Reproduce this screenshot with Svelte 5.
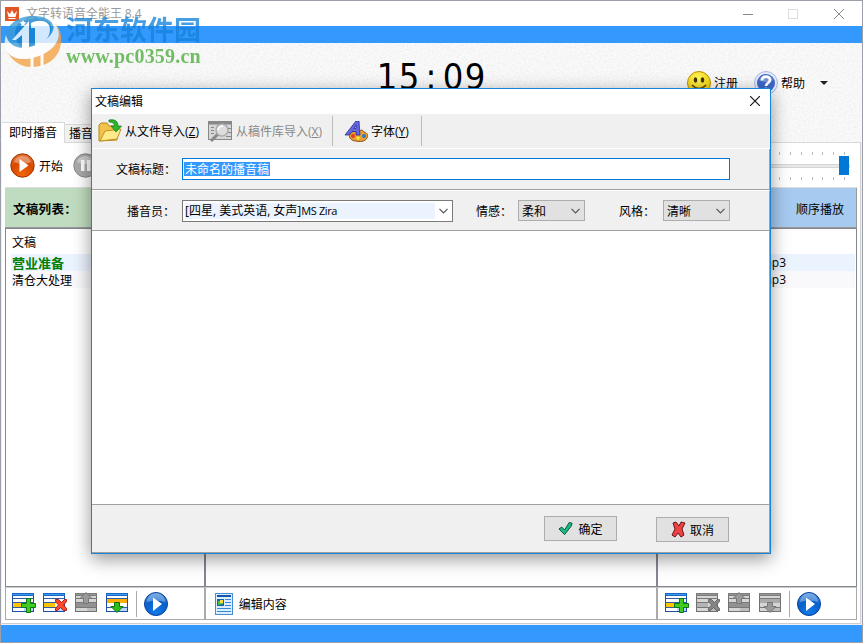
<script>
	const clock = "15:09".split("");

	let title = "未命名的播音稿";

	const scripts = [
		{ name: "营业准备", active: true },
		{ name: "清仓大处理", active: false },
	];

	const music = ["营业背景音乐.mp3", "清仓背景音乐.mp3"];

	const ticks = Array.from({ length: 38 });

	const leftTools = [
		{ kind: "add", disabled: false },
		{ kind: "remove", disabled: false },
		{ kind: "up", disabled: true },
		{ kind: "down", disabled: false },
	];

	const rightTools = [
		{ kind: "add", disabled: false },
		{ kind: "remove", disabled: true },
		{ kind: "up", disabled: true },
		{ kind: "down", disabled: true },
	];
</script>

{#snippet listIcon(kind, disabled)}
	<svg class="list-icon {kind}" class:disabled width="24" height="24" viewBox="0 0 24 24">
		<rect x="0.5" y="1.5" width="21" height="18" fill="#fff" stroke="#1b4fa3" />
		<rect x="0" y="1" width="22" height="3" fill="#1668c4" />
		<rect x="1" y="2" width="20" height="1" fill="#3c9bf0" />
		<path d="M1 6.500h20M1 10.500h20M1 15.500h20" stroke="#315c9e" />
		<rect x="12" y="16" width="9" height="3" fill="#b9d5fb" />
		{#if kind === "down"}
			<rect x="1" y="7" width="20" height="4" fill="#ffad08" />
			<path d="M8.500 10.500h5v4h3.500l-6 6-6-6h3.500z" fill="#32bc1b" stroke="#087308" />
		{:else if kind === "up"}
			<rect x="1" y="11" width="20" height="4" fill="#b08315" />
			<path d="M8.500 11.500h5v-5h3.500l-6-6-6 6h3.500z" fill="#32bc1b" stroke="#087308" />
		{:else}
			<rect x="1" y="11" width="11" height="4" fill="#ffc400" />
			{#if kind === "add"}
				<path d="M14.500 6.500h4v5h5v4h-5v5h-4v-5h-5v-4h5z" fill="#42cc22" stroke="#087a12" />
			{:else}
				<path d="M12.500 7.500h3l3 3 3-3h2v2l-3 3.500 3 3.500v2h-3l-3-3-3 3h-2v-2l3-3.500-3-3.500z" fill="#ff4927" stroke="#b71f14" />
			{/if}
		{/if}
	</svg>
{/snippet}

{#snippet playIcon()}
	<svg width="24" height="24" viewBox="0 0 24 24">
		<circle cx="12" cy="12" r="11.500" fill="url(#play-blue)" stroke="#0a3e9b" />
		<path d="M3 10a9 9 0 0 1 18 0c-6-2-12-1-18 0z" fill="#fff" opacity="0.3" />
		<path d="M9 5.500l9 6.500-9 7z" fill="#fff" />
	</svg>
{/snippet}

{#snippet chevron()}
	<svg class="chevron" width="9" height="6" viewBox="0 0 9 6">
		<path d="M0.500 0.800l4 4 4-4" fill="none" stroke="#555" stroke-width="1.200" />
	</svg>
{/snippet}

<div class="window">
	<header class="title-bar">
		<svg class="app-icon" width="14" height="14" viewBox="0 0 14 14">
			<rect width="14" height="14" fill="#e15624" />
			<path d="M2 4l3 3 2-4 2 4 3-3-1.500 6h-7zM3.500 11h7v1h-7z" fill="#fff" />
		</svg>
		<span class="app-title">文字转语音全能王 <i>8.4</i></span>
		<svg class="window-controls" width="106" height="12" viewBox="0 0 106 12">
			<path d="M0 6.500h10M91 1l10 10M101 1l-10 10" fill="none" stroke="#888" />
			<rect x="45.500" y="1.500" width="9" height="9" fill="none" stroke="#ddd" />
		</svg>
	</header>
	<div class="blue-bar top"></div>

	<section class="banner">
		<svg class="grain" width="100%" height="100%">
			<filter id="paper">
				<feTurbulence type="fractalNoise" baseFrequency="0.5" numOctaves="2" />
				<feColorMatrix values="1 0 0 0 0  1 0 0 0 0  1 0 0 0 0  0 0 0 0 1" />
			</filter>
			<rect width="100%" height="100%" filter="url(#paper)" />
		</svg>
		<div class="clock">
			{#each clock as digit}<span>{digit}</span>{/each}
		</div>
		<div class="links">
			<svg width="24" height="24" viewBox="0 0 24 24">
				<circle cx="12" cy="12" r="11.500" fill="url(#smile)" stroke="#b98d00" />
				<ellipse cx="8.500" cy="9" rx="1.800" ry="2.700" fill="#453500" />
				<ellipse cx="15.500" cy="9" rx="1.800" ry="2.700" fill="#453500" />
				<path d="M5 14q7 7 14 0" fill="none" stroke="#664a00" stroke-width="1.500" />
			</svg>
			<span class="register">注册</span>
			<svg width="24" height="24" viewBox="0 0 24 24">
				<circle cx="12" cy="12" r="11.500" fill="#e3eaff" stroke="#aab9e2" />
				<circle cx="12" cy="12" r="9" fill="#3c68c8" />
				<path d="M5 9a8 8 0 0 1 14 0q-7 4-14 0z" fill="#fff" opacity="0.3" />
				<path d="M8 9.500c0-5 8-5 8-.5 0 3-4 3-4 6" fill="none" stroke="#fff" stroke-width="2.800" />
				<circle cx="12" cy="18" r="1.600" fill="#fff" />
			</svg>
			<span>帮助</span>
			<i class="drop"></i>
		</div>
		<nav class="tabs">
			<span class="tab current">即时播音</span>
			<span class="tab">播音任务</span>
		</nav>
	</section>

	<main class="page">
		<div class="play-bar">
			<svg width="25" height="25" viewBox="0 0 25 25">
				<circle cx="12.500" cy="12.500" r="11.700" fill="url(#play-orange)" stroke="#9c3200" />
				<path d="M4 9a9 9 0 0 1 17 0q-8 4-17 0z" fill="#fff" opacity="0.35" />
				<path d="M9.500 6l9 6.500-9 6.500z" fill="#fff" />
			</svg>
			<span class="start">开始</span>
			<svg width="25" height="25" viewBox="0 0 25 25">
				<circle cx="12.500" cy="12.500" r="11.700" fill="#aaa" stroke="#888" />
				<path d="M4 9a9 9 0 0 1 17 0q-8 4-17 0z" fill="#fff" opacity="0.4" />
				<path d="M8 7h3.500v11H8zM14 7h3.500v11H14z" fill="#fff" />
			</svg>
			<div class="slider">
				<div class="ticks">{#each ticks as _}<i></i>{/each}</div>
				<div class="track"><b></b></div>
				<div class="ticks">{#each ticks as _}<i></i>{/each}</div>
			</div>
		</div>

		<div class="columns">
			<section class="column side">
				<h2 class="head green">文稿列表：</h2>
				<div class="list">
					<div class="list-head">文稿</div>
					{#each scripts as item}
						<div class="item" class:active={item.active}>{item.name}</div>
					{/each}
				</div>
				<div class="tools">
					{#each leftTools as tool}
						{@render listIcon(tool.kind, tool.disabled)}
					{/each}
					<i class="divider"></i>
					{@render playIcon()}
				</div>
			</section>
			<section class="column middle">
				<div class="head"></div>
				<div class="list"></div>
				<div class="tools edit">
					<svg width="18" height="22" viewBox="0 0 18 22">
						<rect x="0.500" y="0.500" width="17" height="21" fill="#dceeff" stroke="#4a8bd0" />
						<rect x="2" y="2" width="14" height="2" fill="#1256ab" />
						<rect x="2" y="6" width="7" height="7" fill="#1463ad" />
						<path d="M3 8h5v3l-5 1z" fill="#4bc54a" />
						<rect x="5" y="7" width="3" height="3" fill="#ffdc35" />
						<path d="M10 6.500h6M10 9.500h6M10 12.500h6M2 15.500h14M2 18.500h14" stroke="#3288da" />
					</svg>
					<span>编辑内容</span>
				</div>
			</section>
			<section class="column side right">
				<div class="head blue">顺序播放</div>
				<div class="list">
					<div class="list-head"></div>
					{#each music as file, i}
						<div class="item file" class:active={i === 0}>{file}</div>
					{/each}
				</div>
				<div class="tools">
					{#each rightTools as tool}
						{@render listIcon(tool.kind, tool.disabled)}
					{/each}
					<i class="divider"></i>
					{@render playIcon()}
				</div>
			</section>
		</div>
	</main>
	<div class="blue-bar bottom"></div>

	<div class="watermark">
		<svg width="60" height="62" viewBox="0 0 60 62">
			<path d="M2 26C7 14 19 9 31 10c8 0 14 3 17 7 6 12-8 22-20 26C17 46 6 42 2 32z" fill="#3a9bd6" />
			<path d="M14 18q14-9 30-3 8 8-3 18-11 9-25 7-9-11-2-22z" fill="#1380cc" />
			<path d="M50 17c8 6 9 18 5 28-5 11-15 15-26 16C17 62 7 54 3 45c17 8 34 2 44-7 8-7 8-15 3-21z" fill="#f5a143" />
			<path d="M2 29c2 10 12 15 24 12 16-4 27-15 23-25 5 4 7 10 5 17-4 12-20 20-35 20C7 53-1 46 1 33z" fill="#fff" />
			<path d="M8 34L25 15v27h-7V29l-6 5zM27 17c10-5 19-1 19 6 0 9-6 14-15 17V22h-4z" fill="#fff" />
			<path d="M28 48v14M38 46v15" stroke="#fff" stroke-width="3" />
			<path d="M19 14l1 2 2.500.5-2 1.500.5 2.500-2-1-2 1 .5-2.500-2-1.500 2.500-.5z" fill="#fff" />
		</svg>
		<div class="watermark-text">
			<strong>河东软件园</strong>
			<b>www.pc0359.cn</b>
		</div>
	</div>

	<div class="dialog" role="dialog">
		<div class="dialog-title">
			<span>文稿编辑</span>
			<svg width="10" height="10" viewBox="0 0 10 10">
				<path d="M0 0l10 10M10 0L0 10" stroke="#111" stroke-width="1.100" />
			</svg>
		</div>
		<div class="dialog-tools">
			<svg class="folder" width="25" height="24" viewBox="0 0 25 24">
				<path d="M1 22V6l2-2h6l2 3h8v14z" fill="#f2c34b" stroke="#b98612" />
				<path d="M2 22l5-10 16-2-4 10z" fill="#ffe98b" stroke="#c4921d" />
				<path d="M11 1c7-1 9 2 9 6h3.500L18 13l-5-6h3.500c0-3-2-4-5.500-4z" fill="#2fb52b" stroke="#13811c" stroke-width="0.800" />
			</svg>
			<span class="import">从文件导入<i>(<u>Z</u>)</i></span>
			<svg class="library" width="25" height="22" viewBox="0 0 25 22">
				<rect x="0.500" y="1.500" width="23" height="18" fill="#d6d6d6" stroke="#888" />
				<path d="M1 3h22" stroke="#888" stroke-width="3" />
				<path d="M3 7.500h3M3 10.500h3M3 13.500h3M18 8.500h5M18 12.500h5M18 16.500h5" stroke="#888" />
				<path d="M10 14l-7 7" stroke="#888" stroke-width="3" />
				<circle cx="14" cy="10" r="6" fill="#ddd" stroke="#aaa" stroke-width="1.500" />
				<path d="M10 10q1-4 5-4" fill="none" stroke="#fff" stroke-width="1.500" />
			</svg>
			<span class="import faded">从稿件库导入<i>(<u>X</u>)</i></span>
			<i class="tool-line"></i>
			<svg class="palette" width="24" height="21" viewBox="0 0 24 21">
				<path d="M6 13c4-4 7-3 9-2 2-3 4-2 5 0 4 1 4 4 3 6-2 4-8 4-11 3-4 0-8-3-6-7z" fill="#e9a02f" stroke="#88501b" />
				<circle cx="9" cy="15" r="2" fill="#e33b27" />
				<circle cx="14" cy="17" r="1.700" fill="#f7ee38" />
				<circle cx="20" cy="15" r="2" fill="#247acb" />
				<path d="M1 14L12 0h3l1 14h-4v-3.500H8L5 14zM10 7.500h2V4z" fill="#6866df" stroke="#272e94" stroke-width="0.800" fill-rule="evenodd" />
			</svg>
			<span class="font">字体<i>(<u>Y</u>)</i></span>
			<i class="tool-line"></i>
		</div>
		<div class="form-row first">
			<label for="title">文稿标题：</label>
			<div class="input" id="title"><span>{title}</span></div>
		</div>
		<div class="form-row second">
			<span class="label">播音员：</span>
			<div class="combo"><span>[四星, 美式英语, 女声]<i>MS Zira</i></span>{@render chevron()}</div>
			<span class="label emotion">情感：</span>
			<div class="select">柔和{@render chevron()}</div>
			<span class="label style">风格：</span>
			<div class="select">清晰{@render chevron()}</div>
		</div>
		<div class="editor"></div>
		<div class="dialog-actions">
			<button class="ok">
				<svg width="16" height="15" viewBox="0 0 17 15">
					<path d="M1 8l3-2 3 3 5-8 3 1-1 3-7 9z" fill="#18bd82" stroke="#064b35" />
				</svg>
				确定
			</button>
			<button class="cancel">
				<svg width="15" height="17" viewBox="0 0 15 17">
					<path d="M2 2l3-1 3 4 2-4 4 1-3 6 2 6-3 2-3-4-3 4-3-2 3-6z" fill="#ef4141" stroke="#69151a" />
				</svg>
				取消
			</button>
		</div>
	</div>

	<svg class="defs" width="0" height="0">
		<defs>
			<radialGradient id="play-blue" cx="50%" cy="85%" r="85%">
				<stop offset="0" stop-color="#1479e8" />
				<stop offset="0.600" stop-color="#0860ca" />
				<stop offset="1" stop-color="#4b8edb" />
			</radialGradient>
			<radialGradient id="play-orange" cx="50%" cy="90%" r="90%">
				<stop offset="0" stop-color="#f26508" />
				<stop offset="0.600" stop-color="#d64800" />
				<stop offset="1" stop-color="#e47536" />
			</radialGradient>
			<radialGradient id="smile" cx="45%" cy="30%" r="70%">
				<stop offset="0" stop-color="#fff75a" />
				<stop offset="1" stop-color="#efc800" />
			</radialGradient>
		</defs>
	</svg>
</div>

<style>
	:global(body) {
		margin: 0;
		overflow: hidden;
	}

	.window {
		position: relative;
		box-sizing: border-box;
		width: 863px;
		height: 643px;
		display: flex;
		flex-direction: column;
		border: 1px solid #9ba0a8;
		overflow: hidden;
		background: #f1f1f1;
		color: #000;
		font: 12px/16px "Noto Sans CJK SC", sans-serif;
		white-space: nowrap;
	}

	svg {
		display: block;
		flex-shrink: 0;
	}

	i {
		font-style: normal;
	}

	.title-bar {
		display: flex;
		align-items: center;
		height: 25px;
		padding: 0 13px 0 4px;
		background: #fff;
		color: #999;
	}

	.app-title {
		margin-left: 7px;
	}

	.app-title i {
		font-family: "Open Sans", sans-serif;
	}

	.window-controls {
		margin-left: auto;
	}

	.blue-bar {
		height: 17px;
		background: #3399ff;
		flex-shrink: 0;
	}

	.banner {
		position: relative;
		display: flex;
		flex-shrink: 0;
		height: 99px;
		background: #fff;
	}

	.grain {
		position: absolute;
		inset: 0;
		opacity: 0.11;
	}

	.clock {
		display: flex;
		position: relative;
		margin: 11px 0 0 375px;
		font: 36px/46px "DejaVu Sans Condensed", "DejaVu Sans", sans-serif;
		font-stretch: condensed;
	}

	.clock span {
		width: 22px;
		display: flex;
		justify-content: center;
	}

	.links {
		position: relative;
		display: flex;
		align-items: center;
		height: 24px;
		margin: 28px 0 0 201px;
	}

	.register {
		margin-right: 16px;
	}

	.links span {
		margin-left: 3px;
	}

	.drop {
		margin-left: 15px;
		border: 4px solid transparent;
		border-top-color: #222;
		border-bottom: 0;
	}

	.tabs {
		position: absolute;
		left: 1px;
		bottom: -1px;
		display: flex;
		align-items: flex-end;
	}

	.tab {
		height: 17px;
		padding: 0 4px;
		border: 1px solid #d9d9d9;
		border-left: 0;
		background: #f0f0f0;
	}

	.tab.current {
		height: 20px;
		padding: 0 7px 0 7px;
		background: #fff;
		border-bottom: 0;
		line-height: 18px;
	}

	.page {
		box-sizing: border-box;
		height: 482px;
		margin: 0 1px 0 1px;
		padding: 0 3px 0 3px;
		background: #fff;
		border-top: 1px solid #d9d9d9;
		border-right: 1px solid #d0d0d0;
		border-bottom: 1px solid #ccc;
	}

	.play-bar {
		display: flex;
		align-items: center;
		height: 43px;
		padding: 1px 0 0 5px;
		border-bottom: 1px solid #ddd;
	}

	.start {
		margin: 0 10px 0 4px;
	}

	.slider {
		width: 410px;
		margin: 0 7px 0 auto;
	}

	.ticks {
		display: flex;
		justify-content: space-between;
		padding: 0 5px;
	}

	.ticks i {
		width: 1px;
		height: 3px;
		background: #bbb;
	}

	.track {
		display: flex;
		justify-content: flex-end;
		align-items: center;
		height: 2px;
		margin: 9px 0;
		border: 1px solid #d5d5d5;
		background: #e7eaea;
	}

	.track b {
		width: 10px;
		height: 19px;
		background: #0078d7;
	}

	.columns {
		display: flex;
		height: 432px;
	}

	.column {
		display: flex;
		flex-direction: column;
	}

	.side {
		width: 200px;
	}

	.middle {
		width: 453px;
	}

	.head {
		box-sizing: border-box;
		height: 40px;
		margin: 0;
		padding: 0 8px;
		border-bottom: 1px solid #999;
		font-size: 12px;
		line-height: 41px;
	}

	.green {
		background: #c0dcc0;
		font-size: 12.500px;
		letter-spacing: 0.300px;
	}

	.blue {
		padding-right: 12px;
		background: #a6caf0;
		border-right: 1px solid #999;
		text-align: right;
	}

	.list {
		box-sizing: border-box;
		height: 359px;
		padding: 0 1px 0 5px;
		border: 1px solid #828790;
		background: #fff;
	}

	.list-head {
		height: 25px;
		line-height: 26px;
	}

	.item {
		height: 17px;
		line-height: 17px;
		background: #f9f9fc;
	}

	.item.active {
		background: #ebf3ff;
	}

	.item.active:not(.file) {
		color: #008000;
		font-size: 13px;
		font-weight: bold;
	}

	.list-head,
	.item {
		padding-left: 1px;
	}

	.file {
		padding-right: 69px;
		font-family: "Open Sans", "Noto Sans CJK SC", sans-serif;
		text-align: right;
	}

	.tools {
		box-sizing: border-box;
		display: flex;
		align-items: center;
		height: 33px;
		padding: 1px 0 0 6px;
		gap: 7px;
		border: 1px solid #aaa;
		border-top-color: #ccc;
		background: #fff;
	}

	.right .tools {
		padding-left: 7px;
	}

	.list-icon.up {
		margin-left: 1px;
	}

	.tools.edit {
		padding-left: 9px;
	}

	.edit span {
		margin-left: -1px;
	}

	.divider {
		width: 1px;
		height: 26px;
		background: #aaa;
		margin-left: -1px;
	}

	.disabled {
		filter: grayscale(1) contrast(0.5) brightness(1.12);
	}

	.bottom {
		margin-top: 1px;
	}

	.watermark {
		position: absolute;
		left: 3px;
		top: 5px;
		display: flex;
		opacity: 0.78;
	}

	.watermark-text {
		display: flex;
		flex-direction: column;
		margin: 7px 0 0 2px;
	}

	.watermark strong {
		font-size: 27px;
		line-height: 32px;
		color: #1683dc;
	}

	.watermark b {
		font: bold 20px/22px "Liberation Serif", serif;
		letter-spacing: 0.200px;
		color: #4bad3c;
	}

	.dialog {
		position: absolute;
		left: 90px;
		top: 87px;
		box-sizing: border-box;
		width: 680px;
		height: 466px;
		border: 1px solid #1883d7;
		background: #f0f0f0;
		box-shadow: 0 5px 17px rgba(0, 0, 0, 0.42);
	}

	.dialog-title {
		box-sizing: border-box;
		display: flex;
		align-items: center;
		justify-content: space-between;
		height: 25px;
		padding: 0 10px 2px 3px;
		background: #fff;
	}

	.dialog-tools {
		display: flex;
		align-items: center;
		height: 34px;
		padding-left: 6px;
		border-bottom: 1px solid #fff;
	}

	.dialog-tools span {
		padding-top: 1px;
	}

	.dialog-tools span i {
		font-family: "Open Sans", sans-serif;
	}

	.import {
		width: 75px;
		margin: 0 8px 0 2px;
	}

	.faded {
		width: 88px;
		margin-left: 3px;
		color: #888;
	}

	.tool-line {
		width: 1px;
		height: 30px;
		background: #bbb;
	}

	.palette {
		margin-left: 11px;
	}

	.font {
		width: 39px;
		margin: 0 11px 0 3px;
	}

	.form-row {
		box-sizing: border-box;
		display: flex;
		align-items: center;
		height: 41px;
		border-right: 1px solid #a0a0a0;
		border-bottom: 1px solid #a0a0a0;
	}

	.first {
		padding-left: 24px;
	}

	.first label {
		width: 66px;
	}

	.input,
	.combo {
		box-sizing: border-box;
		display: flex;
		align-items: center;
		height: 22px;
		border: 1px solid #0078d7;
		background: #fff;
	}

	.input {
		width: 548px;
		padding: 0 0 1px 1px;
	}

	.input span {
		height: 14px;
		line-height: 14px;
		padding: 0 1px;
		background: #3399ff;
		color: #fff;
	}

	.second {
		padding-left: 35px;
		border-top: 1px solid #fff;
	}

	.label {
		width: 55px;
	}

	.combo {
		width: 271px;
		padding: 2px 4px 2px 2px;
		border-color: #7a7a7a;
		justify-content: space-between;
	}

	.combo span {
		width: 250px;
		background: #ebf3ff;
		font-family: "Open Sans", "Noto Sans CJK SC", sans-serif;
	}

	.combo i {
		font-size: 11px;
		letter-spacing: -0.400px;
	}

	.emotion {
		width: 42px;
		margin-left: 23px;
	}

	.style {
		width: 44px;
		margin-left: 34px;
	}

	.select {
		box-sizing: border-box;
		display: flex;
		align-items: center;
		justify-content: space-between;
		width: 67px;
		height: 21px;
		padding: 0 4px 0 3px;
		border: 1px solid #adadad;
		background: #e1e1e1;
	}

	.editor {
		height: 273px;
		background: #fff;
		border-right: 1px solid #a0a0a0;
		border-bottom: 1px solid #a0a0a0;
	}

	.dialog-actions {
		box-sizing: border-box;
		display: flex;
		height: 48px;
		padding: 11px 0 0 452px;
		border-right: 1px solid #a0a0a0;
		border-bottom: 1px solid #a0a0a0;
	}

	button {
		box-sizing: border-box;
		display: flex;
		align-items: center;
		justify-content: center;
		gap: 4px;
		width: 73px;
		height: 25px;
		padding: 0;
		border: 1px solid #adadad;
		background: #e1e1e1;
		font: inherit;
		color: #000;
	}

	.cancel {
		margin: 1px 0 0 39px;
	}
</style>
